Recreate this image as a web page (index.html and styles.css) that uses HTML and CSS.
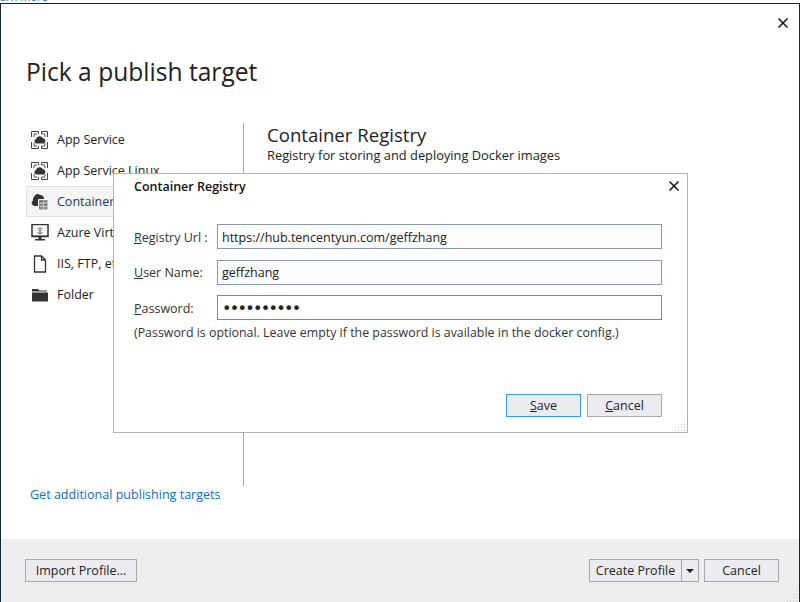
FILE: index.html
```html
<!DOCTYPE html>
<html>
  <head>
    <title>Pick a publish target</title>
    <link rel="stylesheet" href="styles.css">
  </head>
  <body>
    <div class="behind"><span>arn more</span></div>
    <div class="window">
      <button class="close close-main" aria-label="Close">
        <svg width="10" height="10" viewBox="0 0 10 10"><path d="M0.5 0.5L9.5 9.5M9.5 0.5L0.5 9.5" stroke="#111" stroke-width="1.5" fill="none"/></svg>
      </button>
      <div class="content">
        <h1>Pick a publish target</h1>
        <div class="columns">
          <ul class="targets">
            <li>
              <svg class="icon" width="18" height="18" viewBox="0 0 18 18"><path d="M.5 6V.5H7.500V3M10.500 3V.5H16.500V6M.5 11V17.500H7.500V15M10.500 15V17.500H16.500V11M3 3.500V6M14 3.500V6M3 12V14.500M14 12V14.500M3 3H6M11 3H14M3 15H6M11 15H14" stroke="#444" fill="none"/><path d="M5.500 12.500a2.300 2.300 0 0 1-.5-4.500 3.800 3.800 0 0 1 7-.7 2.700 2.700 0 0 1 .7 5.200z" fill="#333"/></svg>
              App Service
            </li>
            <li>
              <svg class="icon" width="18" height="18" viewBox="0 0 18 18"><path d="M.5 6V.5H7.500V3M10.500 3V.5H16.500V6M.5 11V17.500H7.500V15M10.500 15V17.500H16.500V11M3 3.500V6M14 3.500V6M3 12V14.500M14 12V14.500M3 3H6M11 3H14M3 15H6M11 15H14" stroke="#444" fill="none"/><path d="M5.500 12.500a2.300 2.300 0 0 1-.5-4.500 3.800 3.800 0 0 1 7-.7 2.700 2.700 0 0 1 .7 5.200z" fill="#333"/></svg>
              App Service Linux
            </li>
            <li class="selected">
              <svg class="icon" width="18" height="18" viewBox="0 0 18 18"><path d="M3.500 13a3 3 0 0 1-1.500-5.500 5 5 0 0 1 1.500-4.500 4 4 0 0 1 5.500-1 4 4 0 0 1 4 3V13z" fill="#333"/><path d="M7.500 6.500H17V17H7.500z" fill="#8c8c8c" stroke="#f5f5f5"/><path d="M9 10h7M9 13.500h7M12.500 7.500v9" stroke="#c8c8c8"/><path d="M9.500 8.500h2M13.500 11.500h2" stroke="#555"/></svg>
              <span class="link-text">Container Registry</span>
            </li>
            <li>
              <svg class="icon" width="18" height="18" viewBox="0 0 18 18"><path d="M1 .5H17V12.500H1z" stroke="#333" stroke-width="1.500" fill="none"/><path d="M1 11.500H17V13H1zM7.500 13H10.500V15H7.500zM4 15H14V16.500H4z" fill="#333"/><path d="M6.500 5a3 2 0 0 1 5 0M7.500 6.500a2 1.200 0 0 1 3 0M6.500 8.500a3 2 0 0 0 5 0M9 6.500V10" stroke="#555" fill="none"/></svg>
              Azure Virtual Machines
            </li>
            <li>
              <svg class="icon" width="18" height="18" viewBox="0 0 18 18"><path d="M3.500 1H10.500L14.500 5V17H3.500zM10.500 1V5H14.500" stroke="#333" stroke-width="1.300" fill="#fff"/></svg>
              IIS, FTP, etc
            </li>
            <li>
              <svg class="icon" width="18" height="18" viewBox="0 0 18 18"><path d="M1 3H7L8.500 4.500H16V5.500H1z" fill="#333"/><path d="M1 6.500H17V15.500H1z" fill="#333"/></svg>
              Folder
            </li>
          </ul>
          <div class="detail">
            <h2>Container Registry</h2>
            <p>Registry for storing and deploying Docker images</p>
          </div>
        </div>
        <a class="more-targets">Get additional publishing targets</a>
      </div>
      <div class="footer">
        <button class="btn btn-import">Import Profile...</button>
        <div class="footer-right">
          <div class="split">
            <button class="btn split-main">Create Profile</button>
            <button class="btn split-arrow" aria-label="More"><span class="arrow"></span></button>
          </div>
          <button class="btn btn-cancel">Cancel</button>
        </div>
      </div>
      <svg class="grip" width="12" height="12" viewBox="0 0 12 12"><path d="M9 1h1v1H9zM9 4h1v1H9zM6 4h1v1H6zM9 7h1v1H9zM6 7h1v1H6zM3 7h1v1H3zM9 10h1v1H9zM6 10h1v1H6zM3 10h1v1H3zM0 10h1v1H0z" fill="#b9c4d4"/></svg>
    </div>

    <div class="modal">
      <div class="modal-head">
        <span class="modal-title">Container Registry</span>
        <button class="close close-modal" aria-label="Close">
          <svg width="10" height="10" viewBox="0 0 10 10"><path d="M0.500 0.500L9.500 9.500M9.500 0.500L0.500 9.500" stroke="#111" stroke-width="1.500" fill="none"/></svg>
        </button>
      </div>
      <form class="fields">
        <label class="field-label" for="registryUrl"><u>R</u>egistry Url :</label>
        <input class="field-input" id="registryUrl" type="text" value="https://hub.tencentyun.com/geffzhang">
        <label class="field-label" for="userName"><u>U</u>ser Name:</label>
        <input class="field-input" id="userName" type="text" value="geffzhang">
        <label class="field-label" for="password"><u>P</u>assword:</label>
        <input class="field-input field-focus" id="password" type="password" value="geffzhang1">
      </form>
      <p class="hint">(Password is optional. Leave empty if the password is available in the docker config.)</p>
      <div class="modal-buttons">
        <button class="btn btn-cancel btn-default"><u>S</u>ave</button>
        <button class="btn btn-cancel"><u>C</u>ancel</button>
      </div>
      <svg class="grip modal-grip" width="12" height="12" viewBox="0 0 12 12"><path d="M9 1h1v1H9zM9 4h1v1H9zM6 4h1v1H6zM9 7h1v1H9zM6 7h1v1H6zM3 7h1v1H3zM9 10h1v1H9zM6 10h1v1H6zM3 10h1v1H3zM0 10h1v1H0z" fill="#b9c4d4"/></svg>
    </div>
  </body>
</html>
```

FILE: styles.css
```css
* {
  box-sizing: border-box;
}

html,
body {
  height: 100%;
}

body {
  margin: 0;
  overflow: hidden;
  background-color: #fff;
  color: #222;
  font-family: "Open Sans", "Noto Sans", sans-serif;
  font-size: 12.5px;
  display: flex;
  flex-direction: column;
}

.behind {
  height: 3px;
  overflow: hidden;
  color: #0e70c0;
  font-size: 11px;
  line-height: 3px;
}

.behind span {
  display: block;
  transform: translateY(-5px);
}

.window {
  position: relative;
  flex: 1;
  display: flex;
  flex-direction: column;
  border: 1px solid #10283a;
  border-bottom: none;
}

.content {
  flex: 1;
  padding: 0 0 0 25px;
  display: flex;
  flex-direction: column;
}

h1 {
  margin: 49px 0 0;
  height: 70px;
  font-size: 24.6px;
  font-weight: 400;
  line-height: 38px;
  color: #222;
}

.columns {
  display: flex;
  height: 363px;
}

.targets {
  list-style: none;
  margin: 0;
  padding: 1px 0 0;
  width: 218px;
  border-right: 1px solid #a9a9a9;
  height: 363px;
}

.targets li {
  display: flex;
  align-items: center;
  gap: 8px;
  height: 31px;
  padding-left: 5px;
  white-space: nowrap;
  overflow: hidden;
}

.targets li.selected {
  background-color: #f5f5f5;
  border: 1px solid #e0e0e0;
  padding-left: 4px;
}

.link-text {
  color: #1e3a5a;
}

.icon {
  flex: none;
}

.detail {
  padding-left: 23px;
}

h2 {
  margin: 0;
  font-size: 18.6px;
  font-weight: 400;
  line-height: 24px;
}

.detail p {
  margin: 0;
  font-size: 12.85px;
  line-height: 17px;
}

.more-targets {
  margin: 0 0 0 4px;
  font-size: 12.55px;
  line-height: 18px;
  color: #0f6cc9;
}

.footer {
  height: 63px;
  background-color: #eeeeef;
  display: flex;
  justify-content: space-between;
  align-items: flex-start;
  padding: 20px 20px 0 24px;
  margin-top: auto;
}

.footer-right {
  display: flex;
  gap: 5px;
}

.split {
  display: flex;
}

.btn {
  height: 23px;
  padding: 0;
  border: 1px solid #a9a9a9;
  background-color: #ececf0;
  color: #222;
  font-family: inherit;
  font-size: 12.5px;
}

.btn-import {
  width: 112px;
}

.btn-cancel {
  width: 75px;
}

.split-main {
  width: 93px;
}

.split-arrow {
  width: 17px;
  border-left: none;
  display: flex;
  align-items: center;
  justify-content: center;
}

.arrow {
  width: 0;
  height: 0;
  border-left: 4px solid transparent;
  border-right: 4px solid transparent;
  border-top: 4px solid #222;
}

.btn-default {
  border-color: #3399ff;
}

.close {
  padding: 0;
  border: none;
  background: none;
  display: flex;
}

.close-main {
  position: absolute;
  top: 14px;
  right: 11px;
}

.grip {
  position: absolute;
  right: 0;
  bottom: 0;
}

.modal {
  position: absolute;
  left: 113px;
  top: 173px;
  width: 575px;
  height: 260px;
  background-color: #fff;
  border: 1px solid #b4b4b4;
  display: flex;
  flex-direction: column;
  padding: 0 25px 0 20px;
}

.modal-head {
  display: flex;
  justify-content: space-between;
  align-items: center;
  height: 24px;
  margin-right: -17px;
}

.modal-title {
  font-weight: 600;
  color: #111;
  font-size: 12.5px;
}

.fields {
  display: grid;
  grid-template-columns: 83px 1fr;
  row-gap: 10.5px;
  align-items: center;
  margin-top: 26px;
}

.field-label {
  color: #333;
  padding-top: 1px;
}

.field-input {
  width: 100%;
  height: 25px;
  padding: 1px 4px 0;
  border: 1px solid #8a99aa;
  background-color: #fcfcfc;
  color: #222;
  font-family: inherit;
  font-size: 12.5px;
}

.field-focus {
  border-color: #5b8fc9;
  background-color: #fff;
  font-family: "DejaVu Sans", sans-serif;
  font-size: 16px;
  letter-spacing: -1.7px;
}

.hint {
  margin: 4px 0 0;
  color: #333;
  font-size: 12.4px;
  line-height: 17px;
}

.modal-buttons {
  display: flex;
  justify-content: flex-end;
  gap: 6px;
  margin-top: 53px;
}
```
